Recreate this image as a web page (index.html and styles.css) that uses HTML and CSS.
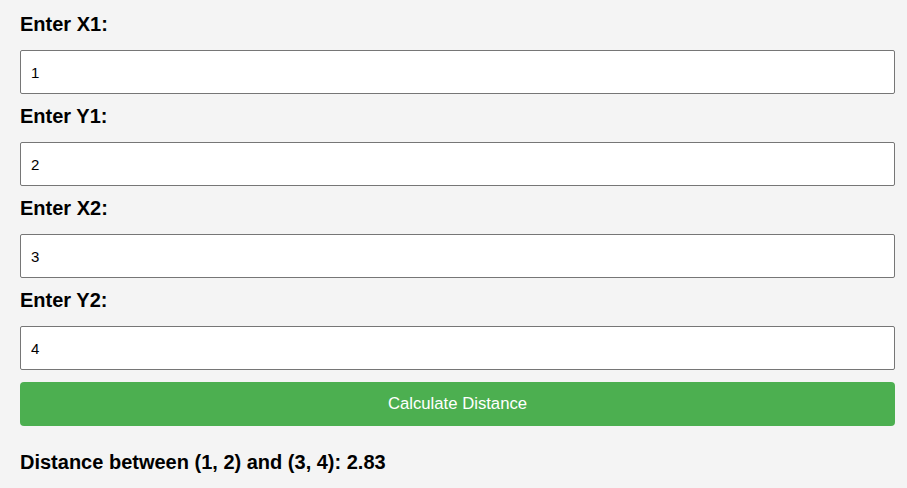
FILE: index.html
```html
<!DOCTYPE html>
<html>
<head>
<meta charset="utf-8">
<link rel="stylesheet" href="styles.css">
</head>
<body>
<div class="calc">
  <label class="field-label" for="x1">Enter X1:</label>
  <input class="field-input" id="x1" type="number" value="1">
  <label class="field-label" for="y1">Enter Y1:</label>
  <input class="field-input" id="y1" type="number" value="2">
  <label class="field-label" for="x2">Enter X2:</label>
  <input class="field-input" id="x2" type="number" value="3">
  <label class="field-label" for="y2">Enter Y2:</label>
  <input class="field-input" id="y2" type="number" value="4">
  <button class="calc-btn" type="button">Calculate Distance</button>
  <div class="result">Distance between (1, 2) and (3, 4): 2.83</div>
</div>
</body>
</html>
```

FILE: styles.css
```css
html, body {
  margin: 0;
  padding: 0;
  background: #f4f4f4;
}

body {
  font-family: "Liberation Sans", Arial, sans-serif;
  color: #000;
}

.calc {
  display: flex;
  flex-direction: column;
  padding: 2px 12px 0 20px;
}

.field-label {
  display: block;
  font-size: 20px;
  font-weight: bold;
  line-height: 22px;
  margin: 11px 0 15px;
}

.field-input {
  box-sizing: border-box;
  width: 100%;
  height: 44px;
  margin: 0;
  padding: 0 10px;
  border: 1px solid #767676;
  border-radius: 2px;
  background: #fff;
  font-family: "Liberation Sans", Arial, sans-serif;
  font-size: 15px;
  color: #000;
  -moz-appearance: textfield;
}

.field-input::-webkit-outer-spin-button,
.field-input::-webkit-inner-spin-button {
  -webkit-appearance: none;
  margin: 0;
}

.calc-btn {
  box-sizing: border-box;
  width: 100%;
  height: 44px;
  margin: 12px 0 0;
  border: none;
  border-radius: 4px;
  background: #4caf50;
  color: #fff;
  font-family: "Liberation Sans", Arial, sans-serif;
  font-size: 16.7px;
  padding: 0;
}

.result {
  margin-top: 25px;
  font-size: 20px;
  font-weight: bold;
  line-height: 22px;
}
```
